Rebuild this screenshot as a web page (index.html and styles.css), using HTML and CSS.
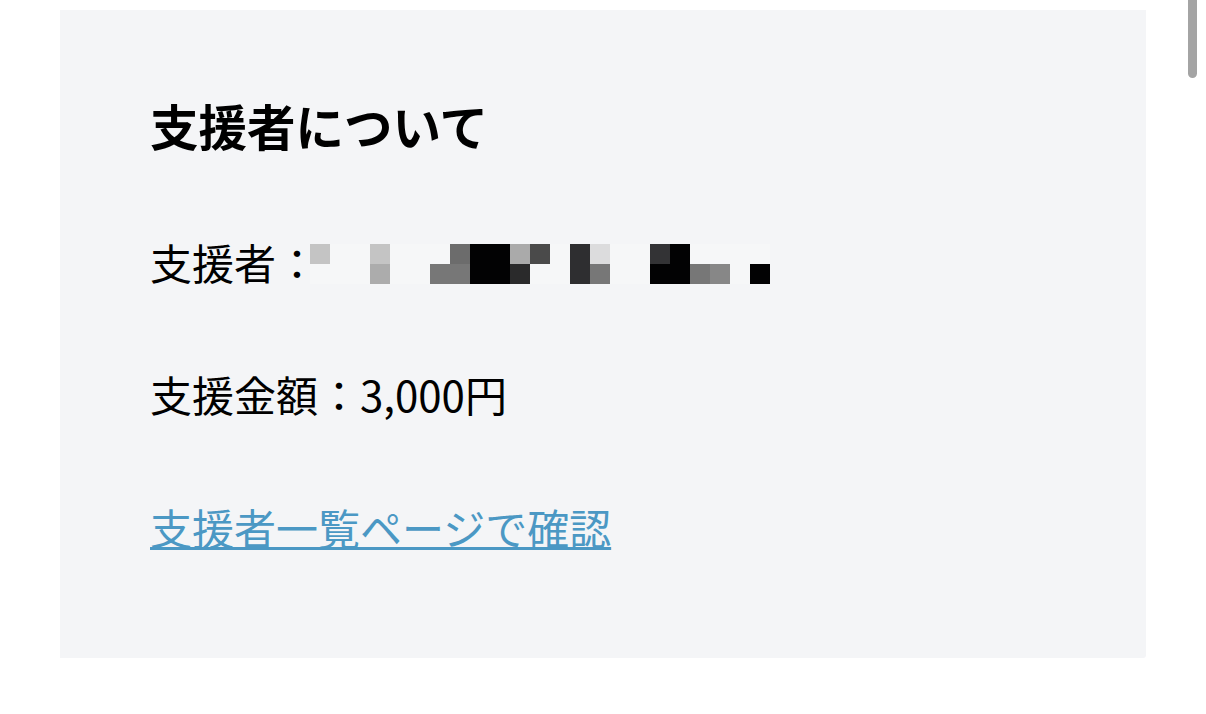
FILE: index.html
```html
<!DOCTYPE html>
<html lang="ja">
<head>
<meta charset="utf-8">
<link rel="stylesheet" href="styles.css">
</head>
<body>
<div class="page">
  <section class="card">
    <h2 class="title">支援者について</h2>
    <div class="row">
      <span class="label">支援者：</span>
      <div class="mosaic">
        <i class="c1"></i><i class="w"></i><i class="w"></i><i class="c1"></i><i class="w"></i><i class="w"></i><i class="w"></i><i class="c6"></i><i class="k"></i><i class="k"></i><i class="ca"></i><i class="c4"></i><i class="w"></i><i class="c2"></i><i class="cd"></i><i class="w"></i><i class="w"></i><i class="c3"></i><i class="k"></i><i class="w"></i><i class="w"></i><i class="w"></i><i class="w"></i>
        <i class="w"></i><i class="w"></i><i class="w"></i><i class="cb"></i><i class="w"></i><i class="w"></i><i class="c7"></i><i class="c7"></i><i class="k"></i><i class="k"></i><i class="c2b"></i><i class="w"></i><i class="w"></i><i class="c2"></i><i class="c7"></i><i class="w"></i><i class="w"></i><i class="k"></i><i class="k"></i><i class="c7"></i><i class="c8"></i><i class="w"></i><i class="k"></i>
      </div>
    </div>
    <p class="row amount">支援金額：3,000円</p>
    <a class="link" href="#">支援者一覧ページで確認</a>
  </section>
  <div class="scrollbar"></div>
</div>
</body>
</html>
```
FILE: styles.css
```css
html, body {
  margin: 0;
  padding: 0;
  background: #ffffff;
}
body {
  font-family: "Noto Sans CJK JP", "Noto Sans", sans-serif;
  color: #000;
}
.page {
  width: 1206px;
  height: 714px;
  padding-top: 10px;
  box-sizing: border-box;
}
.card {
  margin-left: 60px;
  width: 1086px;
  height: 648px;
  box-sizing: border-box;
  background: #f4f5f7;
  border-radius: 0 0 3px 0;
  padding: 85px 0 0 90px;
  display: flex;
  flex-direction: column;
  align-items: flex-start;
}
.title {
  margin: 0;
  font-size: 48.5px;
  line-height: 60px;
  font-weight: 700;
  letter-spacing: 0;
}
.row {
  margin: 77px 0 0 0;
  font-size: 42px;
  line-height: 60px;
  display: flex;
  align-items: center;
}
.amount {
  margin-top: 72px;
}
.label {
  display: block;
}
.mosaic {
  display: grid;
  grid-template-columns: repeat(23, 20px);
  grid-auto-rows: 20px;
  margin-left: -8px;
  margin-top: 4px;
}
.mosaic i { display: block; }
.mosaic .w { background: #f6f7f8; }
.mosaic .c1 { background: #c4c4c4; }
.mosaic .cb { background: #acacac; }
.mosaic .c6 { background: #6c6c6c; }
.mosaic .c7 { background: #777777; }
.mosaic .c8 { background: #878787; }
.mosaic .k { background: #020203; }
.mosaic .ca { background: #aaaaaa; }
.mosaic .c4 { background: #4a4a4a; }
.mosaic .c2 { background: #2e2e30; }
.mosaic .c2b { background: #2a2a2b; }
.mosaic .cd { background: #dcdcdd; }
.mosaic .c3 { background: #333335; }
.link {
  margin-top: 73px;
  font-size: 42px;
  line-height: 60px;
  color: #4b98c4;
  text-decoration: underline;
  text-decoration-thickness: 3px;
  text-underline-offset: 2px;
}
.scrollbar {
  position: absolute;
  left: 1188px;
  top: 0;
  width: 9px;
  height: 78px;
  background: #a4a4a4;
  border-radius: 0 0 5px 5px;
}
```
